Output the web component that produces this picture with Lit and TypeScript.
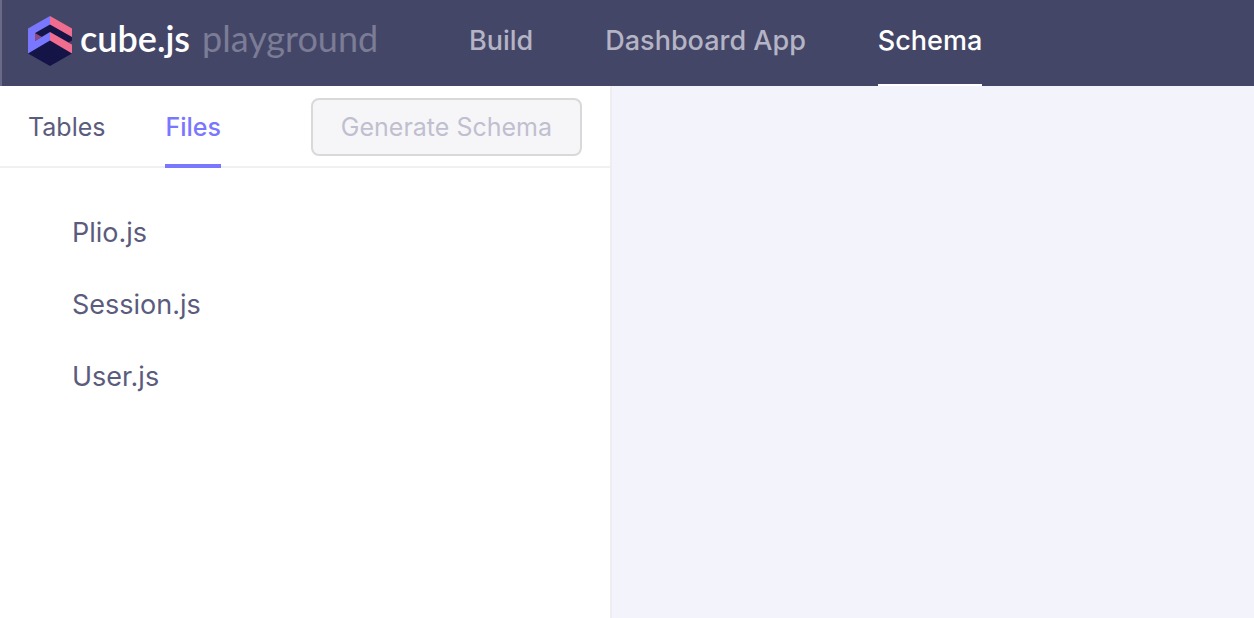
import { LitElement, html, css } from "lit";
import { customElement, state } from "lit/decorators.js";

@customElement("cube-logo")
class CubeLogo extends LitElement {
  static styles = css`
    :host {
      display: flex;
      align-items: center;
      gap: 8px;
      white-space: nowrap;
    }
    .mark {
      display: block;
      width: 44px;
      height: 50px;
      flex: none;
    }
    .word,
    .sub {
      padding-bottom: 6px;
      font: 600 36px/40px "Lato", sans-serif;
      color: #fff;
    }
    .sub {
      padding-left: 4px;
      font-weight: 400;
      color: #7b7c95;
    }
  `;

  render() {
    return html`
      <svg class="mark" viewBox="0 0 44 50" aria-hidden="true">
        <path fill="#141446" d="M22 8 44 20.5V37.5L22 50 0 37.5 7 17Z" />
        <path fill="#444668" d="M44 24.5V28.5L40.5 26.5Z" />
        <path fill="#8d4a7c" d="M7 17 14 21 7 25Z" />
        <path fill="#f16d90" d="M22 0 44 12.5V21L22 8.5ZM22 16 44 28.5V37.5L22 24.5Z" />
        <path fill="#7a77ff" d="M22 0V8.5L7 17V25L22 16V24.5L0 37.5V12.5Z" />
      </svg>
      <span class="word">cube.js</span>
      <span class="sub">playground</span>
    `;
  }
}

@customElement("app-root")
class AppRoot extends LitElement {
  static styles = css`
    :host {
      display: flex;
      flex-direction: column;
      min-height: 100vh;
      font-family: "Inter", sans-serif;
      color: #5b5c7d;
    }
    * {
      box-sizing: border-box;
    }
    a {
      color: inherit;
      text-decoration: none;
    }
    .header {
      display: flex;
      height: 86px;
      padding-left: 26px;
      background: #444668;
      border-left: 2px solid #696a88;
    }
    .brand {
      display: flex;
      align-items: center;
      width: 441px;
      padding-bottom: 4px;
      flex: none;
    }
    .menu {
      display: flex;
      gap: 72px;
      white-space: nowrap;
    }
    .menu a {
      font-size: 27px;
      font-weight: 500;
      line-height: 82px;
      color: #b4b4c4;
      border-bottom: 2px solid transparent;
    }
    .menu a.active {
      color: #fff;
      border-color: #fff;
    }
    .body {
      display: flex;
      flex: 1;
      background: #f3f3fb;
    }
    .sider {
      width: 612px;
      flex: none;
      background: #fff;
      border-right: 2px solid #eeeef2;
    }
    .bar {
      display: flex;
      justify-content: space-between;
      align-items: flex-start;
      height: 82px;
      padding: 0 28px;
      border-bottom: 2px solid #f0f0f0;
    }
    .tabs {
      display: flex;
      gap: 60px;
    }
    .tab {
      height: 82px;
      padding: 4px 0 0;
      border: 0;
      border-bottom: 4px solid transparent;
      background: none;
      font: 400 25px/74px "Inter", sans-serif;
      color: inherit;
    }
    .tab.active {
      color: #7a77ff;
      font-weight: 500;
      border-color: #7a77ff;
    }
    .generate {
      height: 58px;
      margin-top: 12px;
      padding: 0 28px;
      border: 2px solid #d9d9d9;
      border-radius: 8px;
      background: #f6f6f8;
      color: #c0bfd0;
      font: 400 25px/54px "Inter", sans-serif;
    }
    .files {
      margin: 0;
      padding: 29px 0 0 72px;
      list-style: none;
      font-size: 27px;
      line-height: 72px;
    }
  `;

  @state() private tab = "Files";

  render() {
    return html`
      <header class="header">
        <div class="brand"><cube-logo></cube-logo></div>
        <nav class="menu">
          <a href="#build">Build</a>
          <a href="#dashboard">Dashboard App</a>
          <a href="#schema" class="active" aria-current="page">Schema</a>
        </nav>
      </header>
      <div class="body">
        <aside class="sider">
          <div class="bar">
            <div class="tabs" role="tablist">
              ${["Tables", "Files"].map(
                (name) => html`<button
                  class="tab ${name === this.tab ? "active" : ""}"
                  role="tab"
                  aria-selected=${name === this.tab}
                  @click=${() => (this.tab = name)}
                >${name}</button>`
              )}
            </div>
            <button class="generate" disabled>Generate Schema</button>
          </div>
          <ul class="files">
            ${["Plio.js", "Session.js", "User.js"].map(
              (file) => html`<li><a href="#${file}">${file}</a></li>`
            )}
          </ul>
        </aside>
        <main></main>
      </div>
    `;
  }
}
